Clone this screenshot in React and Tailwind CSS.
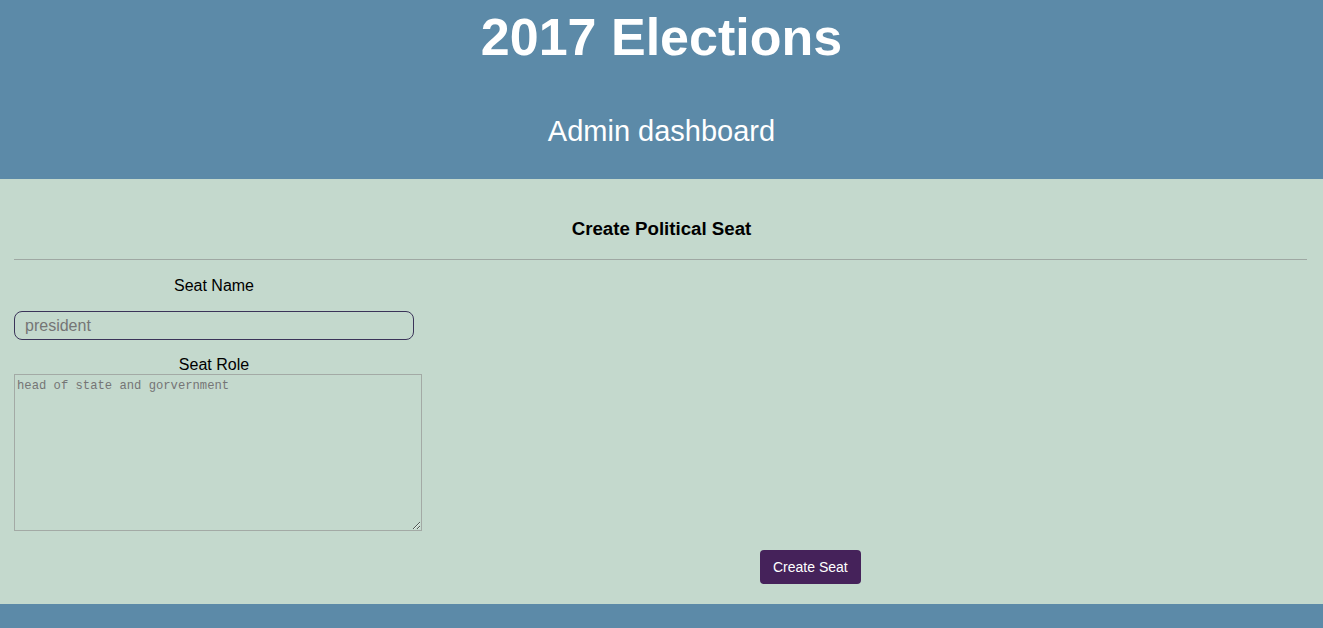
export default function App() {
  return (
    <div className="min-h-screen bg-[#5c8aa8] font-['Liberation_Sans',Arial,sans-serif] text-black">
      {/* Encabezado */}
      <header className="bg-[#5c8aa8] text-white text-center pt-[8px] pb-[31px]">
        <h1 className="text-[52px] leading-[58px] font-bold">2017 Elections</h1>
        <h2 className="mt-[49px] text-[29px] leading-[33px]">Admin dashboard</h2>
      </header>

      {/* Formulario */}
      <main className="bg-[#c4d9cd] pt-[39px] pb-[20px]">
        <h3 className="text-center text-[18.7px] leading-[21px] font-bold">
          Create Political Seat
        </h3>
        <hr className="mt-[20px] ml-[14px] mr-[16px] border-0 border-t border-[#9fa8a3]" />

        <div className="mx-[14px] w-[400px]">
          <label className="block mt-[17px] text-center text-[16px] leading-[18px]">
            Seat Name
          </label>
          <input
            type="text"
            placeholder="president"
            className="block mt-[16px] w-[400px] h-[29px] px-[10px] rounded-[8px] border border-[#3b3459] bg-transparent text-[16px] outline-none placeholder:text-[#757575]"
          />
          <label className="block mt-[16px] text-center text-[16px] leading-[18px]">
            Seat Role
          </label>
          <textarea
            placeholder="head of state and gorvernment"
            className="block w-[408px] h-[157px] px-[2px] pt-[3px] border border-[#a3aaa5] bg-transparent font-['Liberation_Mono',monospace] text-[12.2px] leading-[16px] outline-none placeholder:text-[#757575]"
          />
        </div>

        <div className="mt-[19px] pl-[760px]">
          <button className="h-[34px] px-[13px] rounded-[4px] bg-[#45225a] text-white text-[14px]">
            Create Seat
          </button>
        </div>
      </main>

      <footer className="h-[24px] bg-[#5c8aa8]" />
    </div>
  );
}
